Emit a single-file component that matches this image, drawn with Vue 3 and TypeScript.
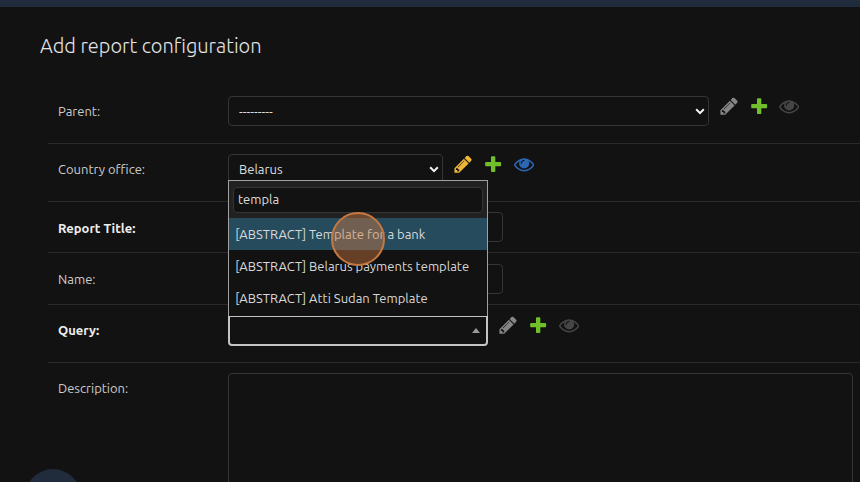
<script setup lang="ts">
import { ref } from 'vue'

interface Row {
  id: string
  label: string
  kind: 'select' | 'input' | 'lookup' | 'area'
  required?: boolean
  value?: string
  active?: boolean
}

const rows: Row[] = [
  { id: 'parent', label: 'Parent:', kind: 'select', value: '---------' },
  { id: 'office', label: 'Country office:', kind: 'select', value: 'Belarus', active: true },
  { id: 'title', label: 'Report Title:', kind: 'input', required: true },
  { id: 'name', label: 'Name:', kind: 'input' },
  { id: 'query', label: 'Query:', kind: 'lookup', required: true },
  { id: 'description', label: 'Description:', kind: 'area' },
]

const search = ref('templa')
const highlighted = ref(0)
const options = [
  { id: 'bank', text: '[ABSTRACT] Template for a bank' },
  { id: 'payments', text: '[ABSTRACT] Belarus payments template' },
  { id: 'sudan', text: '[ABSTRACT] Atti Sudan Template' },
]

const icons = [
  {
    name: 'change',
    path: 'M491 1536l91-91-235-235-91 91v107h128v128h107zm523-928q0-22-22-22-10 0-17 7l-542 542q-7 7-7 17 0 22 22 22 10 0 17-7l542-542q7-7 7-17zm-54-192l416 416-832 832h-416v-416zm683 96q0 53-37 90l-166 166-416-416 166-165q36-38 90-38 53 0 91 38l235 234q37 39 37 91z',
  },
  {
    name: 'add',
    path: 'M1600 796v192q0 40-28 68t-68 28h-416v416q0 40-28 68t-68 28h-192q-40 0-68-28t-28-68v-416h-416q-40 0-68-28t-28-68v-192q0-40 28-68t68-28h416v-416q0-40 28-68t68-28h192q40 0 68 28t28 68v416h416q40 0 68 28t28 68z',
  },
  {
    name: 'view',
    path: 'M1664 960q-152-236-381-353 61 104 61 225 0 185-131.5 316.5t-316.5 131.5-316.5-131.5-131.5-316.5q0-121 61-225-229 117-381 353 133 205 333.5 326.5t434.5 121.5 434.5-121.5 333.5-326.5zm-720-384q0-20-14-34t-34-14q-125 0-214.5 89.5t-89.5 214.5q0 20 14 34t34 14 34-14 14-34q0-86 61-147t147-61q20 0 34-14t14-34zm848 384q0 34-20 69-140 230-376.5 368.5t-499.5 138.5-499.5-139-376.5-368q-20-35-20-69t20-69q140-229 376.5-368t499.5-139 499.5 139 376.5 368q20 35 20 69z',
  },
]
</script>

<template>
  <div class="page">
    <header class="topbar"></header>
    <main class="content">
      <h1 class="heading">Add report configuration</h1>
      <form class="fields" @submit.prevent>
        <div v-for="row in rows" :key="row.id" class="row" :class="row.id">
          <label class="label" :class="{ required: row.required }">{{ row.label }}</label>
          <div class="box" :class="row.kind">
            <span v-if="row.value" class="value">{{ row.value }}</span>
            <svg v-if="row.kind === 'select'" class="chevron" viewBox="0 0 10 7">
              <path d="M1.2 1.3 5 5.1 8.8 1.3" />
            </svg>
            <template v-if="row.kind === 'lookup'">
              <i class="arrow-up"></i>
              <div class="dropdown">
                <div class="search-wrap"><input v-model="search" class="search" type="text" /></div>
                <div
                  v-for="(option, i) in options"
                  :key="option.id"
                  class="option"
                  :class="{ highlighted: i === highlighted }"
                  @mouseenter="highlighted = i"
                >{{ option.text }}</div>
                <div class="click-marker"></div>
              </div>
            </template>
          </div>
          <div v-if="row.kind === 'select' || row.kind === 'lookup'" class="links" :class="{ active: row.active }">
            <svg v-for="icon in icons" :key="icon.name" :class="icon.name" viewBox="0 0 1792 1792">
              <path :d="icon.path" />
            </svg>
          </div>
        </div>
      </form>
    </main>
    <div class="bubble"></div>
  </div>
</template>

<style>
body {
  margin: 0;
  background: #121212;
}
</style>

<style scoped>
* {
  box-sizing: border-box;
}
.page {
  position: relative;
  width: 860px;
  height: 482px;
  overflow: hidden;
  background: #121212;
  color: #d6d6d6;
  font-family: Ubuntu, "Noto Sans", "Open Sans", sans-serif;
  font-size: 13px;
}
.topbar {
  height: 7px;
  background: #202b3c;
}
.content {
  padding: 24px 0 0 40px;
}
.heading {
  height: 30px;
  margin: 0 0 25px;
  font-size: 20px;
  font-weight: 300;
  line-height: 30px;
  white-space: nowrap;
  color: #e4e4e4;
}
.fields {
  margin-left: 8px;
}
.row {
  display: flex;
  align-items: flex-start;
  height: 58px;
  padding: 10px 0 0 10px;
  border-bottom: 1px solid #2a2a2a;
}
.row.title {
  height: 51px;
}
.row.title .label {
  line-height: 32px;
}
.row.name {
  height: 52px;
  padding-top: 11px;
}
.row.query {
  padding-top: 11px;
}
.row.query .label {
  line-height: 28px;
}
.row.description {
  height: 160px;
  border-bottom: 0;
}
.label {
  flex: none;
  width: 170px;
  line-height: 30px;
  white-space: nowrap;
  color: #cccccc;
}
.required {
  font-weight: 700;
  color: #eeeeee;
}
.box {
  position: relative;
  display: flex;
  flex: none;
  align-items: center;
  justify-content: space-between;
  width: 275px;
  height: 30px;
  padding: 0 3px 0 10px;
  border: 1px solid #353535;
  border-radius: 4px;
  background: #121212;
}
.parent .box {
  width: 481px;
}
.office .box {
  width: 215px;
}
.box.area {
  width: 625px;
  height: 150px;
}
.box.lookup {
  width: 260px;
  justify-content: flex-end;
  padding-right: 6px;
  border: 2px solid #c4c4c4;
  border-top-width: 1px;
  border-radius: 0 0 4px 4px;
}
.value {
  color: #dedede;
}
.chevron {
  width: 10px;
  height: 7px;
}
.chevron path {
  fill: none;
  stroke: #f4f4f4;
  stroke-width: 2;
}
.arrow-up {
  border: 4px solid transparent;
  border-top: 0;
  border-bottom: 5px solid #999999;
}
.links {
  display: flex;
  gap: 10px;
  padding-left: 9.5px;
}
.office .links,
.query .links {
  padding-left: 10.1px;
}
.query .links {
  margin-top: -1.5px;
}
.links svg {
  width: 20.3px;
  height: 20.3px;
  fill: #858585;
}
.links .add {
  fill: #70bf2b;
}
.links .view {
  fill: #454545;
}
.links.active .change {
  fill: #efb735;
}
.links.active .view {
  fill: #2b68b4;
}
.dropdown {
  position: absolute;
  z-index: 2;
  bottom: 28px;
  left: -2px;
  width: 260px;
  height: 136px;
  border: 1px solid #a0a0a0;
  border-bottom: 0;
  background: #121212;
}
.search-wrap {
  height: 37px;
  padding: 6px 4px 5px;
  background: #212121;
}
.search {
  display: block;
  width: 250px;
  height: 26px;
  padding: 0 4px 2px;
  border: 1px solid #353535;
  border-radius: 4px;
  outline: 0;
  background: #121212;
  color: #dedede;
  font: inherit;
}
.option {
  height: 32px;
  padding-left: 6.3px;
  line-height: 33px;
  white-space: nowrap;
  color: #d8d8d8;
}
.highlighted {
  background: #264b5d;
}
.click-marker {
  position: absolute;
  top: 31px;
  left: 102px;
  width: 54px;
  height: 54px;
  border: 2px solid #c57840;
  border-radius: 50%;
  background: rgba(214, 126, 65, 0.43);
}
.bubble {
  position: absolute;
  top: 469px;
  left: 25px;
  width: 56px;
  height: 56px;
  border-radius: 50%;
  background: #202b3c;
}
</style>
